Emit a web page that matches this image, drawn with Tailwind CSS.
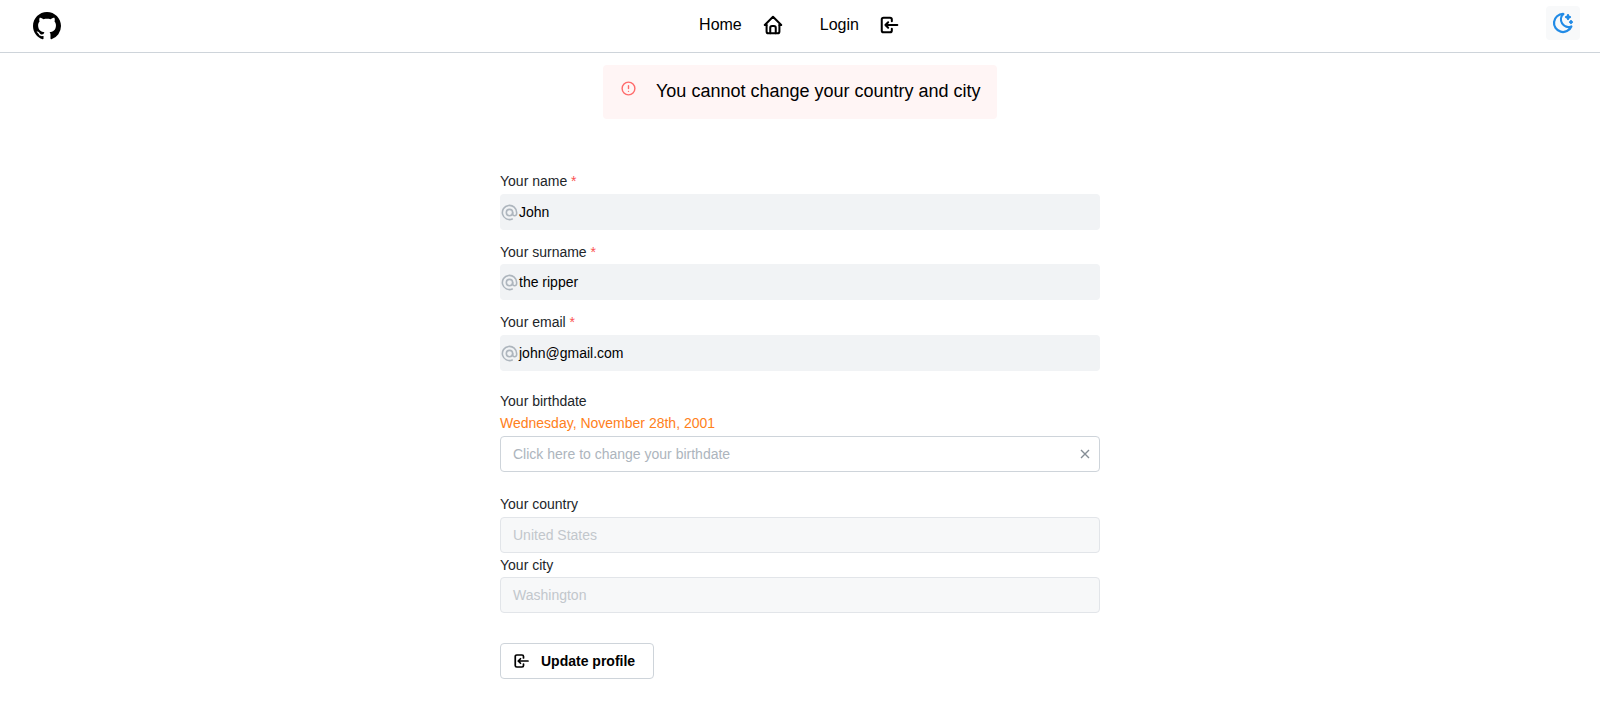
<!doctype html>
<html lang="en">
<head>
<meta charset="utf-8">
<title>Profile</title>
<script src="https://cdn.jsdelivr.net/npm/@tailwindcss/browser@4"></script>
</head>
<body class="bg-white text-black font-['Liberation_Sans',Arial,sans-serif] h-[703px] overflow-hidden">
<header class="h-[53px] border-b border-[#ced4da] flex items-center justify-between pl-[33px] pr-[20px]">
  <svg class="w-[28px] h-[28px] -mt-[1px]" viewBox="0 0 16 16" fill="#000"><path d="M8 0C3.58 0 0 3.58 0 8c0 3.54 2.29 6.53 5.47 7.59.4.07.55-.17.55-.38 0-.19-.01-.82-.01-1.49-2.01.37-2.53-.49-2.69-.94-.09-.23-.48-.94-.82-1.13-.28-.15-.68-.52-.01-.53.63-.01 1.08.58 1.23.82.72 1.21 1.87.87 2.33.66.07-.52.28-.87.51-1.07-1.78-.2-3.64-.89-3.64-3.95 0-.87.31-1.59.82-2.15-.08-.2-.36-1.02.08-2.12 0 0 .67-.21 2.2.82.64-.18 1.32-.27 2-.27s1.36.09 2 .27c1.53-1.04 2.2-.82 2.2-.82.44 1.1.16 1.92.08 2.12.51.56.82 1.27.82 2.15 0 3.07-1.87 3.75-3.65 3.95.29.25.54.73.54 1.48 0 1.07-.01 1.93-.01 2.2 0 .21.15.46.55.38A8.01 8.01 0 0 0 16 8c0-4.42-3.58-8-8-8z"/></svg>
  <nav class="flex items-center text-[16px] leading-[24px] -mt-[3px] mr-[7px]">
    <span>Home</span>
    <svg class="w-[22px] h-[22px] ml-[20px] mt-[1px]" viewBox="0 0 24 24" fill="none" stroke="#000" stroke-width="2.2" stroke-linecap="round" stroke-linejoin="round"><path d="M5 12H3l9-9 9 9h-2"/><path d="M5 12v7a2 2 0 0 0 2 2h10a2 2 0 0 0 2-2v-7"/><path d="M9 21v-6a2 2 0 0 1 2-2h2a2 2 0 0 1 2 2v6"/></svg>
    <span class="ml-[36px]">Login</span>
    <svg class="w-[22px] h-[22px] ml-[20px] mt-[1px]" viewBox="0 0 24 24" fill="none" stroke="#000" stroke-width="2.2" stroke-linecap="round" stroke-linejoin="round"><path d="M14 8V6a2 2 0 0 0-2-2H5a2 2 0 0 0-2 2v12a2 2 0 0 0 2 2h7a2 2 0 0 0 2-2v-2"/><path d="M20 12H7l3-3m0 6-3-3"/></svg>
  </nav>
  <div class="w-[34px] h-[34px] rounded bg-[#f8f9fa] flex items-center justify-center -mt-[7px]">
    <svg class="w-[24px] h-[24px]" viewBox="0 0 24 24" fill="none" stroke="#228be6" stroke-width="2.25" stroke-linecap="round" stroke-linejoin="round"><path d="M12 3h.393a7.5 7.5 0 0 0 7.92 12.446A9 9 0 1 1 12 2.992z"/><path d="M17 4a2 2 0 0 0 2 2 2 2 0 0 0-2 2 2 2 0 0 0-2-2 2 2 0 0 0 2-2"/><path d="M19 11h2m-1-1v2"/></svg>
  </div>
</header>
<main class="flex flex-col items-center">
  <div class="mt-[12px] w-[394px] h-[54px] rounded bg-[#fff5f5] flex items-center pl-[17px]">
    <svg class="w-[17px] h-[17px] -mt-[7px]" viewBox="0 0 24 24" fill="none" stroke="#ff6b6b" stroke-width="2" stroke-linecap="round" stroke-linejoin="round"><circle cx="12" cy="12" r="9"/><path d="M12 8v4"/><path d="M12 16h.01"/></svg>
    <span class="ml-[19px] -mt-[2px] text-[18px] leading-[28px]">You cannot change your country and city</span>
  </div>
  <form class="w-[600px] mt-[53px] text-[14px]">
    <div class="h-[22px] leading-[18px] text-[#212529]">Your name <span class="text-[#fa5252]">*</span></div>
    <div class="h-[36px] rounded bg-[#f1f3f5] flex items-center">
      <svg class="w-[19px] h-[19px]" viewBox="0 0 24 24" fill="none" stroke="#adb5bd" stroke-width="2" stroke-linecap="round" stroke-linejoin="round"><circle cx="12" cy="12" r="4"/><path d="M16 12v1.5a2.5 2.5 0 0 0 5 0V12a9 9 0 1 0-5.5 8.28"/></svg>
      <span>John</span>
    </div>
    <div class="h-[22px] leading-[20px] text-[#212529] mt-[12px]">Your surname <span class="text-[#fa5252]">*</span></div>
    <div class="h-[36px] rounded bg-[#f1f3f5] flex items-center">
      <svg class="w-[19px] h-[19px]" viewBox="0 0 24 24" fill="none" stroke="#adb5bd" stroke-width="2" stroke-linecap="round" stroke-linejoin="round"><circle cx="12" cy="12" r="4"/><path d="M16 12v1.5a2.5 2.5 0 0 0 5 0V12a9 9 0 1 0-5.5 8.28"/></svg>
      <span>the ripper</span>
    </div>
    <div class="h-[22px] leading-[18px] text-[#212529] mt-[13px]">Your email <span class="text-[#fa5252]">*</span></div>
    <div class="h-[36px] rounded bg-[#f1f3f5] flex items-center">
      <svg class="w-[19px] h-[19px]" viewBox="0 0 24 24" fill="none" stroke="#adb5bd" stroke-width="2" stroke-linecap="round" stroke-linejoin="round"><circle cx="12" cy="12" r="4"/><path d="M16 12v1.5a2.5 2.5 0 0 0 5 0V12a9 9 0 1 0-5.5 8.28"/></svg>
      <span>john@gmail.com</span>
    </div>
    <div class="h-[22px] leading-[18px] text-[#212529] mt-[21px]">Your birthdate</div>
    <div class="h-[22px] leading-[18px] text-[#ff8020]">Wednesday, November 28th, 2001</div>
    <div class="h-[36px] rounded border border-[#ced4da] flex items-center justify-between pl-[12px] pr-[8px]">
      <span class="text-[#adb5bd]">Click here to change your birthdate</span>
      <svg class="w-[12px] h-[12px]" viewBox="0 0 12 12" fill="none" stroke="#868e96" stroke-width="1.4"><path d="M2 2l8 8M10 2l-8 8"/></svg>
    </div>
    <div class="h-[22px] leading-[18px] text-[#212529] mt-[23px]">Your country</div>
    <div class="h-[36px] rounded border border-[#e2e5e9] bg-[#f7f8f9] flex items-center pl-[12px] text-[#c2c7cc]">United States</div>
    <div class="h-[22px] leading-[20px] text-[#212529] mt-[2px]">Your city</div>
    <div class="h-[36px] rounded border border-[#e2e5e9] bg-[#f7f8f9] flex items-center pl-[12px] text-[#c2c7cc]">Washington</div>
    <div class="mt-[30px] w-[154px] h-[36px] rounded border border-[#ced4da] flex items-center pl-[12px] font-bold">
      <svg class="w-[18px] h-[18px]" viewBox="0 0 24 24" fill="none" stroke="#000" stroke-width="2.3" stroke-linecap="round" stroke-linejoin="round"><path d="M14 8V6a2 2 0 0 0-2-2H5a2 2 0 0 0-2 2v12a2 2 0 0 0 2 2h7a2 2 0 0 0 2-2v-2"/><path d="M20 12H7l3-3m0 6-3-3"/></svg>
      <span class="ml-[10px]">Update profile</span>
    </div>
  </form>
</main>
</body>
</html>
